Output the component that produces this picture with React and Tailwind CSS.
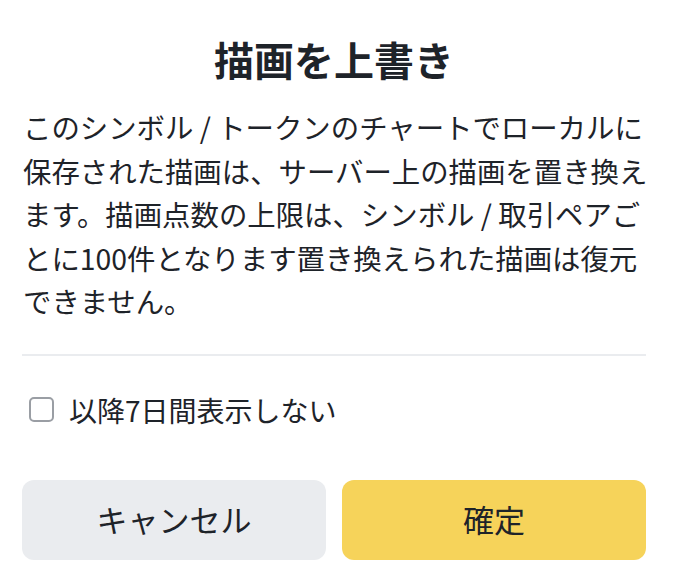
export default function App() {
  return (
    <div
      className="w-[680px] h-[566px] bg-white pl-[22px] pr-[22px] pt-[33px] text-[#1e2329] overflow-hidden"
      style={{ fontFamily: '"Noto Sans CJK JP", "Noto Sans", sans-serif' }}
    >
      <h1 className="text-center text-[40px] leading-[52px] font-bold mr-[12px]">描画を上書き</h1>
      <p className="mt-[20px] text-[28.4px] leading-[43.5px] pl-[1px]">
        このシンボル / トークンのチャートでローカルに保存された描画は、サーバー上の描画を置き換えます。描画点数の上限は、シンボル / 取引ペアごとに100件となります置き換えられた描画は復元
        <br />
        できません。
      </p>
      <div className="mt-[31px] mr-[12px] h-[2px] bg-[#eaecef]" />
      <label className="mt-[32px] flex items-center h-[44px] pl-[7px] gap-[15px]">
        <span className="w-[25px] h-[25px] rounded-[5px] border-2 border-[#9a9ea4] bg-white shrink-0" />
        <span className="text-[28px] leading-[44px]">以降7日間表示しない</span>
      </label>
      <div className="mt-[48px] mr-[12px] flex gap-[16px]">
        <button className="flex-1 h-[80px] rounded-[12px] bg-[#eaecef] text-[31px] text-[#1e2329]">
          キャンセル
        </button>
        <button className="flex-1 h-[80px] rounded-[12px] bg-[#f6d35a] text-[31px] text-[#1e2329]">
          確定
        </button>
      </div>
    </div>
  );
}
